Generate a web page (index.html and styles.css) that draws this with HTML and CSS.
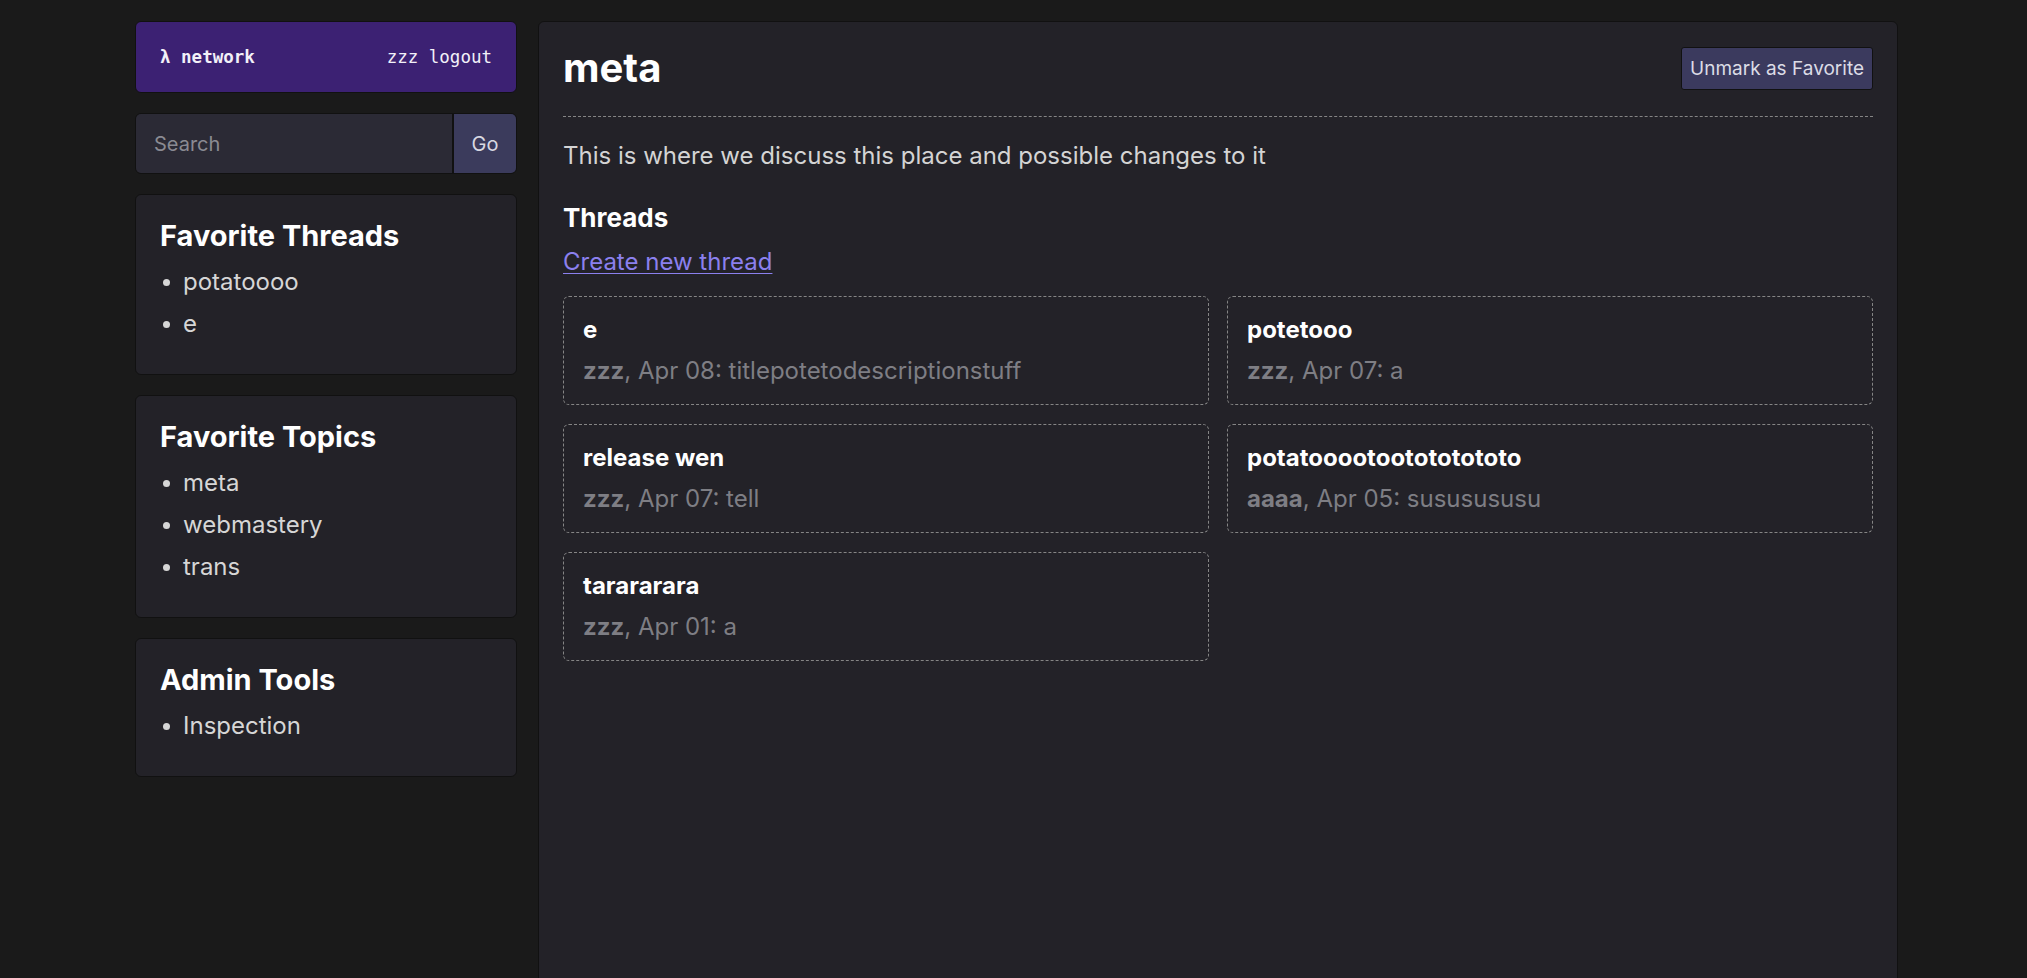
FILE: index.html
```html
<!DOCTYPE html>
<html lang="en">
<head>
<meta charset="utf-8">
<title>meta - λ network</title>
<link rel="stylesheet" href="styles.css">
</head>
<body>
<div class="layout">
  <aside class="sidebar">
    <header class="brand">
      <a class="brand-name" href="#">λ network</a>
      <span class="brand-user">zzz <a href="#">logout</a></span>
    </header>
    <form class="search">
      <input class="search-input" type="text" placeholder="Search">
      <button class="search-go" type="button">Go</button>
    </form>
    <section class="side-card">
      <h2 class="side-title">Favorite Threads</h2>
      <ul class="side-list">
        <li>potatoooo</li>
        <li>e</li>
      </ul>
    </section>
    <section class="side-card">
      <h2 class="side-title">Favorite Topics</h2>
      <ul class="side-list">
        <li>meta</li>
        <li>webmastery</li>
        <li>trans</li>
      </ul>
    </section>
    <section class="side-card">
      <h2 class="side-title">Admin Tools</h2>
      <ul class="side-list">
        <li>Inspection</li>
      </ul>
    </section>
  </aside>
  <main class="panel">
    <div class="panel-head">
      <h1 class="topic-title">meta</h1>
      <button class="fav-btn" type="button">Unmark as Favorite</button>
    </div>
    <p class="topic-desc">This is where we discuss this place and possible changes to it</p>
    <h2 class="threads-title">Threads</h2>
    <a class="new-thread" href="#">Create new thread</a>
    <div class="thread-grid">
      <div class="thread-card">
        <div class="thread-name">e</div>
        <div class="thread-meta"><b>zzz</b>, Apr 08: titlepotetodescriptionstuff</div>
      </div>
      <div class="thread-card">
        <div class="thread-name">potetooo</div>
        <div class="thread-meta"><b>zzz</b>, Apr 07: a</div>
      </div>
      <div class="thread-card">
        <div class="thread-name">release wen</div>
        <div class="thread-meta"><b>zzz</b>, Apr 07: tell</div>
      </div>
      <div class="thread-card">
        <div class="thread-name">potatooootootototototo</div>
        <div class="thread-meta"><b>aaaa</b>, Apr 05: sususususu</div>
      </div>
      <div class="thread-card">
        <div class="thread-name">tarararara</div>
        <div class="thread-meta"><b>zzz</b>, Apr 01: a</div>
      </div>
    </div>
  </main>
</div>
</body>
</html>
```

FILE: styles.css
```css
* { box-sizing: border-box; }

html, body {
  margin: 0;
  background: #1a1a1a;
  color: #d4d4d4;
  font-family: Inter, "Noto Sans", sans-serif;
  font-size: 24px;
  height: 100%;
  overflow: hidden;
}

.layout {
  display: flex;
  gap: 21px;
  align-items: flex-start;
  margin: 21px 0 0 135px;
  width: 1763px;
  height: calc(100% - 21px);
}

.sidebar {
  width: 382px;
  flex: none;
  display: flex;
  flex-direction: column;
  gap: 20px;
}

.brand {
  height: 72px;
  background: #3c2173;
  border: 1px solid #111;
  border-radius: 6px;
  display: flex;
  align-items: center;
  justify-content: space-between;
  padding: 0 24px;
  font-family: "DejaVu Sans Mono", "Liberation Mono", monospace;
  font-size: 17.5px;
  color: #f2f0f8;
}
.brand a { color: inherit; text-decoration: none; }
.brand-name { font-weight: bold; }

.search {
  display: flex;
  height: 61px;
  margin: 0;
  border: 1px solid #111;
  border-radius: 6px;
  overflow: hidden;
}
.search-input {
  flex: 1;
  min-width: 0;
  border: 0;
  border-right: 2px solid #111;
  background: #2b2a35;
  color: #ddd;
  font: 20px Inter, sans-serif;
  padding: 0 18px;
  outline: none;
}
.search-input::placeholder { color: #8a8a92; }
.search-go {
  width: 62px;
  border: 0;
  background: #3b3b5c;
  color: #d8d8e2;
  font: 20px Inter, sans-serif;
  padding: 0;
}

.side-card {
  background: #232228;
  border: 1px solid #111;
  border-radius: 6px;
  padding: 23px 23px 29px 24px;
}
.side-title {
  margin: 0 0 8px;
  color: #fff;
  font-size: 29px;
  font-weight: 700;
  line-height: 35px;
}
.side-list {
  list-style: none;
  margin: 0;
  padding: 0;
}
.side-list li {
  display: flex;
  align-items: center;
  line-height: 42px;
  color: #d6d6d6;
}
.side-list li::before {
  content: "";
  width: 7px;
  height: 7px;
  border-radius: 50%;
  background: #d6d6d6;
  margin: 0 13px 0 3px;
  flex: none;
}

.panel {
  flex: 1;
  align-self: stretch;
  background: #232228;
  border: 1px solid #111;
  border-radius: 6px;
  padding: 24px 24px;
  min-height: 1000px;
}

.panel-head {
  display: flex;
  align-items: center;
  justify-content: space-between;
  padding-bottom: 26px;
  border-bottom: 1px dashed #858585;
}
.topic-title {
  margin: 0;
  color: #fff;
  font-size: 40px;
  line-height: 44px;
  font-weight: 700;
}
.fav-btn {
  height: 43px;
  padding: 0 8px;
  background: #3b3a5e;
  border: 1px solid #111;
  border-radius: 3px;
  color: #dcdce6;
  font: 19px Inter, sans-serif;
}

.topic-desc {
  margin: 21px 0 0;
  line-height: 36px;
  color: #d4d4d4;
}

.threads-title {
  margin: 28px 0 0;
  color: #fff;
  font-size: 26px;
  line-height: 31px;
  font-weight: 700;
}

.new-thread {
  display: inline-block;
  margin-top: 11px;
  line-height: 36px;
  color: #8b80ee;
  text-decoration: underline;
  text-underline-offset: 3px;
  text-decoration-thickness: 1px;
}

.thread-grid {
  margin-top: 16px;
  display: grid;
  grid-template-columns: 1fr 1fr;
  column-gap: 18px;
  row-gap: 19px;
}
.thread-card {
  border: 1px dashed #858585;
  border-radius: 6px;
  padding: 15px 19px;
}
.thread-name {
  color: #fff;
  font-weight: 700;
  font-size: 24px;
  line-height: 36px;
}
.thread-meta {
  margin-top: 5px;
  color: #7e7e84;
  font-size: 24px;
  line-height: 36px;
}
.thread-meta b { font-weight: 700; }
```
